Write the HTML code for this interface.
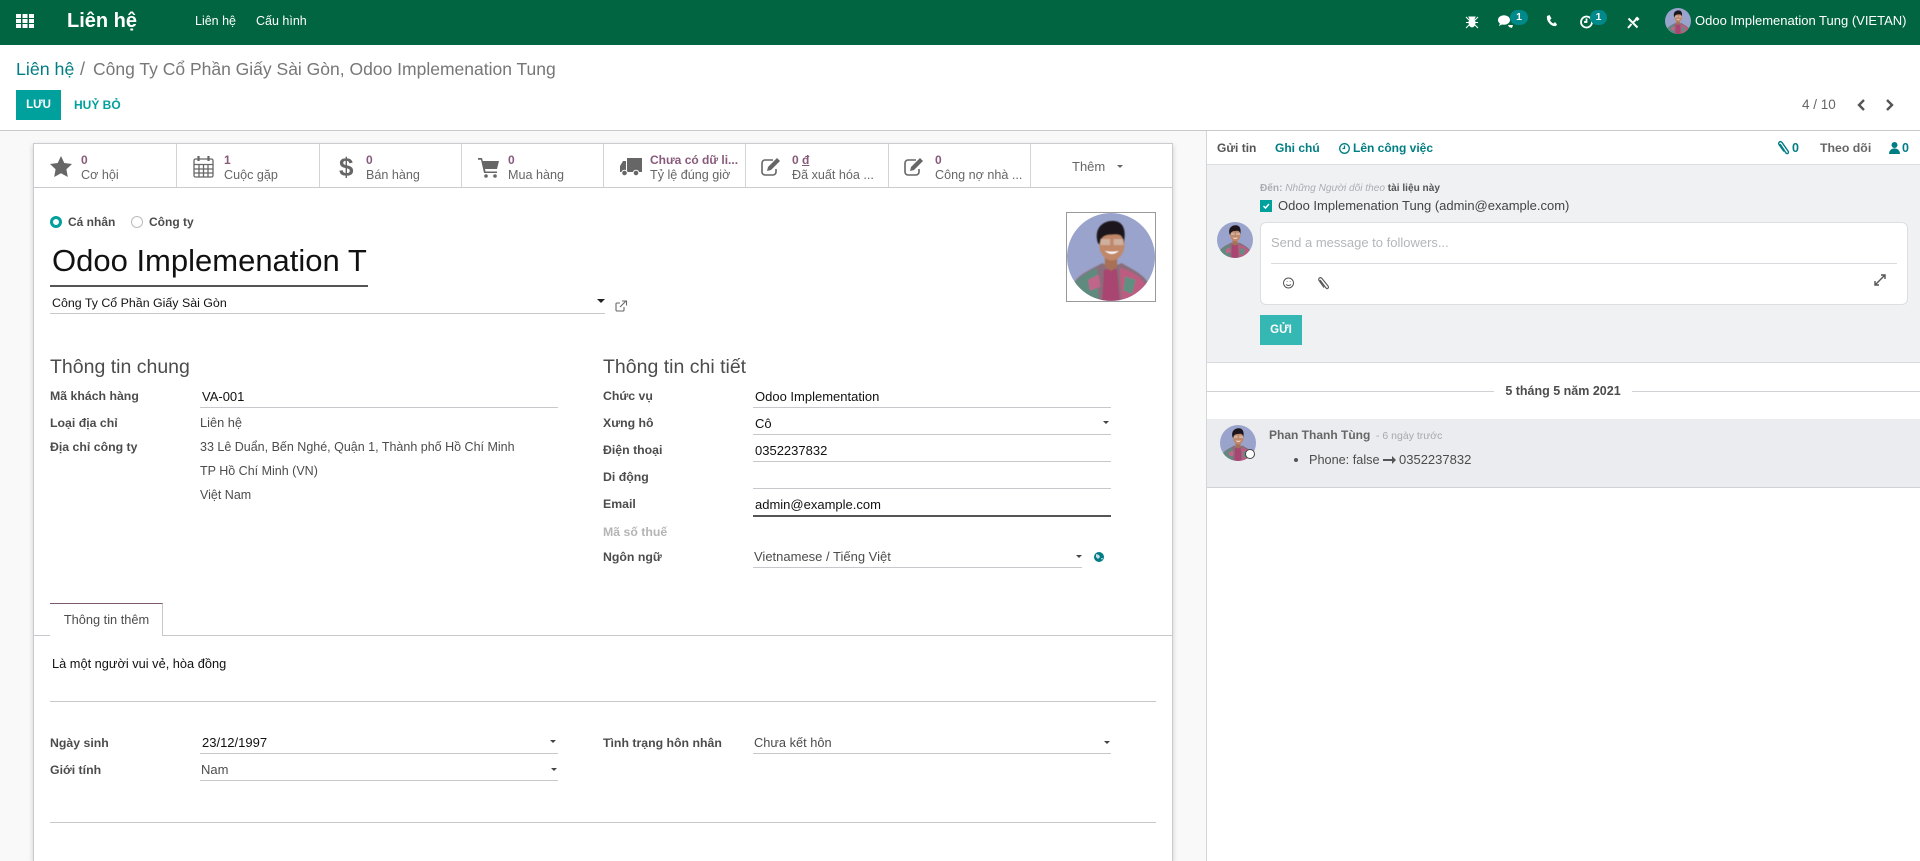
<!DOCTYPE html>
<html lang="vi"><head><meta charset="utf-8"><title>Liên hệ</title>
<style>
*{box-sizing:border-box}
html,body{margin:0;padding:0;width:1920px;height:861px;overflow:hidden;background:#fff;font-family:"Liberation Sans","Noto Sans CJK SC",sans-serif;font-size:13px;color:#4c4c4c}
.a{position:absolute}
.t{position:absolute;white-space:nowrap;line-height:16px;height:16px}
.b{font-weight:700;font-size:12.300px}
.w{color:#fff}
.k{color:#111}
.l{position:absolute;height:1px;background:#c6c8cb}
.p{color:#875a7b;font-weight:700}
.s{color:#666}
.tl{color:#017e84}
svg{position:absolute;overflow:visible}
.car{position:absolute;width:0;height:0;border-left:4px solid transparent;border-right:4px solid transparent;border-top:4px solid #444}
</style></head><body>
<svg width="0" height="0" style="position:absolute"><defs>
<filter id="bl"><feGaussianBlur stdDeviation=".5"/></filter>
<symbol id="ph" viewBox="0 0 100 100">
<clipPath id="cc"><ellipse cx="50" cy="50" rx="50" ry="50"/></clipPath>
<g clip-path="url(#cc)">
<rect width="100" height="100" fill="#99a3cc"/>
<g filter="url(#bl)">
<path d="M8 80C12 70 28 64 40 57L50 62L62 57C74 64 88 70 92 80L100 100H0Z" fill="#8a6d7c"/>
<path d="M8 80C14 72 26 66 34 62L36 100H14Z" fill="#5f8a7e"/>
<path d="M24 76L36 70L38 84L26 88Z" fill="#c0668a"/>
<path d="M42 64L57 64L60 100L40 100Z" fill="#a8446f"/>
<path d="M60 62C72 66 84 72 90 82L72 100L62 100Z" fill="#bd5c80"/>
<path d="M66 72L78 76L74 92L64 88Z" fill="#5e8f80"/>
<path d="M43 50H57V61L50 66L43 61Z" fill="#a86f54"/>
<ellipse cx="51" cy="35" rx="14.500" ry="19" fill="#c08768"/>
<path d="M35 34C30 16 42 9 52 9C63 9 68 18 64.500 34C63 27 62 24 54 24.500C46 25 39 24 37 36Z" fill="#1b191c"/>
<path d="M38 29.500h11v7h-11zM53 29.500h11v7h-11z" fill="#d7c5bb" opacity=".65"/>
<path d="M43 43q8 7 16 0q-8 2-16 0z" fill="#fff"/>
</g></g></symbol>
<symbol id="ed" viewBox="0 0 22 20"><path d="M15 12v3a3 3 0 0 1-3 3H4a3 3 0 0 1-3-3V6a3 3 0 0 1 3-3h8" fill="none" stroke="currentColor" stroke-width="1.600"/><path d="M6 14l1-4L16 1l3 3-9 9z" fill="currentColor"/></symbol>
</defs></svg>

<!-- topbar -->
<div class="a" style="left:0;top:0;width:1920px;height:45px;background:#016541"></div>
<svg style="left:16px;top:14px" width="18" height="14" fill="#fff"><path d="M0 0h5v4H0zM6.500 0h5v4h-5zM13 0h5v4h-5zM0 5h5v4H0zM6.500 5h5v4h-5zM13 5h5v4h-5zM0 10h5v4H0zM6.500 10h5v4h-5zM13 10h5v4h-5z"/></svg>
<div class="t w" style="left:67px;top:9px;font-size:20px;font-weight:700;line-height:24px;height:24px">Liên hệ</div>
<div class="t w" style="left:195px;top:13px;font-size:12.500px">Liên hệ</div>
<div class="t w" style="left:256px;top:13px;font-size:12.500px">Cấu hình</div>
<svg style="left:1466px;top:15px" width="12" height="13" fill="#fff"><ellipse cx="6" cy="7.500" rx="3.500" ry="5"/><path d="M3 2h6L8 4H4zM0 2l3 3M12 2L9 5M0 7.500h3M9 7.500h3M0 13l3-3M12 13L9 10" stroke="#fff"/></svg>
<svg style="left:1498px;top:15px" width="16" height="14" fill="#fff"><ellipse cx="6" cy="5" rx="6" ry="4.800"/><path d="M2 8L1 11l4-2zM10 10h5l-1 3-3-1z"/></svg>
<div class="a" style="left:1510px;top:10px;width:18px;height:15px;border-radius:8px;background:#00898a"></div><div class="t w" style="font-weight:700;left:1510px;width:18px;text-align:center;top:9px;font-size:10.500px">1</div>
<svg style="left:1546px;top:15px" width="11" height="12" fill="#fff"><path d="M1 1l2.500-1 2 3.500-1.500 1.500c.5 1.500 2 3 3.500 3.500L9 7l2 2.500L10 11c-5 1-10-5-9-10z"/></svg>
<svg style="left:1580px;top:15px" width="13" height="14" fill="none" stroke="#fff" stroke-width="1.800"><circle cx="6.500" cy="7" r="5.500"/><path d="M6.500 3.500V7H4"/></svg>
<div class="a" style="left:1590px;top:10px;width:17px;height:15px;border-radius:8px;background:#00898a"></div><div class="t w" style="font-weight:700;left:1590px;width:17px;text-align:center;top:9px;font-size:10.500px">1</div>
<svg style="left:1627px;top:17px" width="12" height="12" fill="none" stroke="#fff" stroke-width="2"><path d="M1.500 1.500l9 9M10.500 1L6 5.500M4.500 7L1 11"/><path d="M9 .5l2.500 2.500" stroke-width="3"/></svg>
<svg style="left:1665px;top:8px" width="26" height="26"><use href="#ph"/></svg>
<div class="t w" style="left:1695px;top:13px;font-size:13px">Odoo Implemenation Tung (VIETAN)</div>

<!-- control panel -->
<div class="t" style="left:16px;top:58px;height:22px;line-height:22px;font-size:17.800px;color:#017e84">Liên hệ</div>
<div class="t" style="left:80px;top:58px;height:22px;line-height:22px;font-size:18px;color:#777">/</div>
<div class="t" style="left:93px;top:58px;height:22px;line-height:22px;font-size:17.500px;color:#777">Công Ty Cổ Phần Giấy Sài Gòn, Odoo Implemenation Tung</div>
<div class="a w" style="font-weight:700;left:16px;top:90px;width:45px;height:30px;background:#00a09d;text-align:center;line-height:30px;font-size:11.500px">LƯU</div>
<div class="t" style="font-weight:700;left:74px;top:97px;font-size:12px;color:#00a09d">HUỶ BỎ</div>
<div class="t" style="left:1802px;top:97px;color:#666;font-size:13.500px">4 / 10</div>
<svg style="left:1857px;top:99px" width="8" height="12" fill="none" stroke="#555" stroke-width="2.400"><path d="M7 1L2 6l5 5"/></svg>
<svg style="left:1886px;top:99px" width="8" height="12" fill="none" stroke="#555" stroke-width="2.400"><path d="M1 1l5 5-5 5"/></svg>
<div class="a" style="left:0;top:130px;width:1920px;height:1px;background:#c9c9c9"></div>

<!-- sheet bg -->
<div class="a" style="left:0;top:131px;width:1206px;height:730px;background:#f9f9f9"></div>
<div class="a" style="left:33px;top:143px;width:1140px;height:718px;background:#fff;border:1px solid #c9cbce;border-bottom:0;box-shadow:0 2px 5px rgba(0,0,0,.18)"></div>

<!-- stat buttons -->
<div class="l" style="left:34px;top:187px;width:1138px;background:#c9cbce"></div>
<div class="a" style="left:176px;top:144px;width:1px;height:43px;background:#d2d4d6"></div>
<div class="a" style="left:319px;top:144px;width:1px;height:43px;background:#d2d4d6"></div>
<div class="a" style="left:461px;top:144px;width:1px;height:43px;background:#d2d4d6"></div>
<div class="a" style="left:603px;top:144px;width:1px;height:43px;background:#d2d4d6"></div>
<div class="a" style="left:745px;top:144px;width:1px;height:43px;background:#d2d4d6"></div>
<div class="a" style="left:888px;top:144px;width:1px;height:43px;background:#d2d4d6"></div>
<div class="a" style="left:1030px;top:144px;width:1px;height:43px;background:#d2d4d6"></div>

<svg style="left:50px;top:156px" width="22" height="21" fill="#666"><path d="M11 0l3.300 7 7.700 1-5.600 5.300L17.800 21 11 17.200 4.200 21l1.400-7.700L0 8l7.700-1z"/></svg>
<div class="t p" style="left:81px;top:152px;font-size:12px">0</div><div class="t s" style="left:81px;top:167px;font-size:12.600px">Cơ hội</div>

<svg style="left:193px;top:156px" width="21" height="22" fill="none" stroke="#666" stroke-width="1.300"><rect x="1" y="3" width="19" height="18" rx="1.500"/><path d="M1 8.500h19M1 13h19M1 17h19M6 8v13M10.500 8v13M15 8v13"/><path d="M5.500 0v5M15.500 0v5" stroke-width="2.200"/></svg>
<div class="t p" style="left:224px;top:152px;font-size:12px">1</div><div class="t s" style="left:224px;top:167px;font-size:12.600px">Cuộc gặp</div>

<div class="t" style="font-weight:700;left:339px;top:153px;height:28px;line-height:28px;font-size:26px;color:#666">$</div>
<div class="t p" style="left:366px;top:152px;font-size:12px">0</div><div class="t s" style="left:366px;top:167px;font-size:12.600px">Bán hàng</div>

<svg style="left:478px;top:158px" width="21" height="20" fill="#666"><path d="M0 0h4l.8 3H21l-2 8H7l.5 2.500H19V15H6L3 1.800H0z"/><circle cx="8" cy="18" r="1.800"/><circle cx="17" cy="18" r="1.800"/></svg>
<div class="t p" style="left:508px;top:152px;font-size:12px">0</div><div class="t s" style="left:508px;top:167px;font-size:12.600px">Mua hàng</div>

<svg style="left:620px;top:158px" width="22" height="18" fill="#666"><path d="M7 0h15v14H7zM0 8l3-5h3v11H0z"/><circle cx="4.500" cy="15" r="2.800" stroke="#fff"/><circle cx="16" cy="15" r="2.800" stroke="#fff"/></svg>
<div class="t p" style="left:650px;top:152px;font-size:12px">Chưa có dữ li...</div><div class="t s" style="left:650px;top:167px;font-size:12.600px">Tỷ lệ đúng giờ</div>

<svg style="left:761px;top:157px;color:#666" width="22" height="20"><use href="#ed"/></svg>
<div class="t p" style="left:792px;top:152px;font-size:12px">0 <u>đ</u></div><div class="t s" style="left:792px;top:167px;font-size:12.600px">Đã xuất hóa ...</div>

<svg style="left:904px;top:157px;color:#666" width="22" height="20"><use href="#ed"/></svg>
<div class="t p" style="left:935px;top:152px;font-size:12px">0</div><div class="t s" style="left:935px;top:167px;font-size:12.600px">Công nợ nhà ...</div>

<div class="t s" style="left:1072px;top:159px;font-size:13px">Thêm</div>
<div class="car" style="left:1117px;top:165px;border-top-color:#666;border-left-width:3.500px;border-right-width:3.500px;border-top-width:3.500px"></div>

<!-- title area -->
<div class="a" style="left:50px;top:216px;width:12px;height:12px;border-radius:50%;background:#fff;border:3.500px solid #00a09d"></div>
<div class="t b" style="left:68px;top:214px;font-size:12px">Cá nhân</div>
<div class="a" style="left:131px;top:216px;width:12px;height:12px;border-radius:50%;background:#fff;border:1px solid #bbb"></div>
<div class="t b" style="left:149px;top:214px;font-size:12px">Công ty</div>
<div class="t" style="left:52px;top:241px;height:40px;line-height:40px;font-size:31px;color:#111">Odoo Implemenation T</div>
<div class="a" style="left:50px;top:285px;width:318px;height:2px;background:#555"></div>
<div class="t k" style="left:52px;top:295px;font-size:12.400px">Công Ty Cổ Phần Giấy Sài Gòn</div>
<div class="l" style="left:50px;top:313px;width:555px"></div>
<div class="car" style="left:597px;top:299px;border-top-color:#222"></div>
<svg style="left:615px;top:300px" width="12" height="12" fill="none" stroke="#666" stroke-width="1.100"><path d="M9 7v3a1 1 0 0 1-1 1H2a1 1 0 0 1-1-1V4a1 1 0 0 1 1-1h3M5 7l5.500-5.500M7 1h4.500v4.500"/></svg>
<div class="a" style="left:1066px;top:212px;width:90px;height:90px;border:1px solid #999"></div>
<svg style="left:1067px;top:213px" width="88" height="88"><use href="#ph"/></svg>

<!-- left group -->
<div class="t" style="left:50px;top:355px;height:24px;line-height:24px;font-size:19.500px">Thông tin chung</div>
<div class="t b" style="left:50px;top:388px">Mã khách hàng</div>
<div class="t k" style="left:202px;top:389px">VA-001</div>
<div class="l" style="left:200px;top:407px;width:358px"></div>
<div class="t b" style="left:50px;top:415px">Loại địa chỉ</div>
<div class="t" style="left:200px;top:415px;font-size:12.800px">Liên hệ</div>
<div class="t b" style="left:50px;top:439px">Địa chỉ công ty</div>
<div class="t" style="left:200px;top:439px;font-size:12.500px">33 Lê Duẩn, Bến Nghé, Quận 1, Thành phố Hồ Chí Minh</div>
<div class="t" style="left:200px;top:463px;font-size:12.500px">TP Hồ Chí Minh (VN)</div>
<div class="t" style="left:200px;top:487px;font-size:12.500px">Việt Nam</div>

<!-- right group -->
<div class="t" style="left:603px;top:355px;height:24px;line-height:24px;font-size:19.500px">Thông tin chi tiết</div>
<div class="t b" style="left:603px;top:388px">Chức vụ</div>
<div class="t k" style="left:755px;top:389px">Odoo Implementation</div>
<div class="l" style="left:753px;top:407px;width:358px"></div>
<div class="t b" style="left:603px;top:415px">Xưng hô</div>
<div class="t k" style="left:755px;top:416px">Cô</div>
<div class="car" style="left:1103px;top:421px;border-left-width:3.500px;border-right-width:3.500px;border-top-width:3.500px"></div>
<div class="l" style="left:753px;top:434px;width:358px"></div>
<div class="t b" style="left:603px;top:442px">Điện thoại</div>
<div class="t k" style="left:755px;top:443px">0352237832</div>
<div class="l" style="left:753px;top:461px;width:358px"></div>
<div class="t b" style="left:603px;top:469px">Di động</div>
<div class="l" style="left:753px;top:488px;width:358px"></div>
<div class="t b" style="left:603px;top:496px">Email</div>
<div class="t k" style="left:755px;top:497px">admin@example.com</div>
<div class="a" style="left:753px;top:515px;width:358px;height:2px;background:#555"></div>
<div class="t b" style="left:603px;top:524px;color:#b5b5b5">Mã số thuế</div>
<div class="t b" style="left:603px;top:549px">Ngôn ngữ</div>
<div class="t" style="left:754px;top:549px">Vietnamese / Tiếng Việt</div>
<div class="car" style="left:1076px;top:555px;border-left-width:3px;border-right-width:3px;border-top-width:3px"></div>
<div class="l" style="left:753px;top:567px;width:329px"></div>
<svg style="left:1094px;top:552px" width="10" height="10"><circle cx="5" cy="5" r="5" fill="#017e84"/><path d="M2 2l3 1 1 2-2 2-2-2zM7 6l2 0-1 2z" fill="#cde"/></svg>

<!-- notebook -->
<div class="l" style="left:34px;top:635px;width:1138px"></div>
<div class="a" style="left:50px;top:603px;width:113px;height:33px;background:#fff;border-right:1px solid #c6c8cb;border-top:1px solid #7c5a73"></div>
<div class="t" style="left:50px;top:612px;width:113px;text-align:center;font-size:12.800px">Thông tin thêm</div>
<div class="t k" style="left:52px;top:656px;font-size:12.800px">Là một người vui vẻ, hòa đồng</div>
<div class="l" style="left:50px;top:701px;width:1106px"></div>
<div class="t b" style="left:50px;top:735px">Ngày sinh</div>
<div class="t k" style="left:202px;top:735px">23/12/1997</div>
<div class="car" style="left:550px;top:740px;border-left-width:3.500px;border-right-width:3.500px;border-top-width:3.500px"></div>
<div class="l" style="left:200px;top:753px;width:358px"></div>
<div class="t b" style="left:50px;top:762px">Giới tính</div>
<div class="t" style="left:201px;top:762px">Nam</div>
<div class="car" style="left:551px;top:768px;border-left-width:3px;border-right-width:3px;border-top-width:3px"></div>
<div class="l" style="left:200px;top:780px;width:358px"></div>
<div class="t b" style="left:603px;top:735px">Tình trạng hôn nhân</div>
<div class="t" style="left:754px;top:735px;font-size:12.800px">Chưa kết hôn</div>
<div class="car" style="left:1104px;top:741px;border-left-width:3px;border-right-width:3px;border-top-width:3px"></div>
<div class="l" style="left:753px;top:753px;width:358px"></div>
<div class="l" style="left:50px;top:822px;width:1106px"></div>

<!-- chatter -->
<div class="a" style="left:1206px;top:131px;width:1px;height:730px;background:#d3d5d8"></div>
<div class="a" style="left:1207px;top:164px;width:713px;height:199px;background:#f0f1f3;border-bottom:1px solid #d8dadd"></div>
<div class="l" style="left:1207px;top:164px;width:713px;background:#dcdee0"></div>
<div class="t" style="font-weight:700;left:1217px;top:140px;font-size:12px;color:#555">Gửi tin</div>
<div class="t tl" style="font-weight:700;left:1275px;top:140px;font-size:12px">Ghi chú</div>
<svg style="left:1339px;top:143px" width="11" height="11" fill="none" stroke="#017e84" stroke-width="1.300"><circle cx="5.500" cy="5.500" r="4.800"/><path d="M5.500 2.500v3H3.500"/></svg>
<div class="t tl" style="font-weight:700;left:1353px;top:140px;font-size:12px">Lên công việc</div>
<svg style="left:1778px;top:141px" width="11" height="14" fill="none" stroke="#017e84" stroke-width="1.400"><path d="M2 3l6 9c2 2 3-1 2-2L4 1.500c-2-2-4 0-3 2l5 7"/></svg>
<div class="t tl" style="font-weight:700;left:1792px;top:140px;font-size:12.500px">0</div>
<div class="t" style="font-weight:700;left:1820px;top:140px;font-size:12.300px;color:#666">Theo dõi</div>
<svg style="left:1889px;top:142px" width="11" height="12" fill="#017e84"><circle cx="5.500" cy="3" r="3"/><path d="M0 12c0-7.500 11-7.500 11 0z"/></svg>
<div class="t tl" style="font-weight:700;left:1902px;top:140px;font-size:12.500px">0</div>

<div class="t" style="left:1260px;top:181px;font-size:10.100px;color:#a9adb2"><b>Đến:</b> <i>Những Người dõi theo</i> <b style="color:#555">tài liệu này</b></div>
<div class="a" style="left:1260px;top:200px;width:12px;height:12px;background:#00a09d"></div>
<svg style="left:1263px;top:203px" width="7" height="6" fill="none" stroke="#fff" stroke-width="1.500"><path d="M.5 3l2 2L6 1"/></svg>
<div class="t" style="left:1278px;top:198px;font-size:13px;color:#444">Odoo Implemenation Tung (admin@example.com)</div>
<svg style="left:1217px;top:222px" width="36" height="36"><use href="#ph"/></svg>
<div class="a" style="left:1260px;top:222px;width:648px;height:83px;background:#fff;border:1px solid #dcdee1;border-radius:6px"></div>
<div class="t" style="left:1271px;top:235px;font-size:13px;color:#b4b6b9">Send a message to followers...</div>
<div class="l" style="left:1271px;top:263px;width:626px;background:#d9dbde"></div>
<svg style="left:1283px;top:277px" width="11" height="12" fill="none" stroke="#555" stroke-width="1"><circle cx="5.500" cy="6" r="5"/><path d="M3 7.500q2.500 2 5 0M3.800 4.500h.6M6.800 4.500h.6"/></svg>
<svg style="left:1318px;top:277px" width="11" height="13" fill="none" stroke="#555" stroke-width="1.100"><path d="M2 3l6 8c2 2 3-1 2-2L4 1.500c-2-2-4 0-3 2l5 7"/></svg>
<svg style="left:1874px;top:274px" width="12" height="12" fill="none" stroke="#555" stroke-width="1.400"><path d="M1 11l10-10M7 1h4v4M1 7v4h4"/></svg>
<div class="a w" style="font-weight:700;left:1260px;top:315px;width:42px;height:30px;background:#35b7b4;text-align:center;line-height:30px;font-size:11.500px">GỬI</div>

<div class="l" style="left:1207px;top:391px;width:287px;background:#cfd1d4"></div>
<div class="l" style="left:1632px;top:391px;width:288px;background:#cfd1d4"></div>
<div class="t" style="font-weight:700;left:1494px;top:383px;width:138px;text-align:center;font-size:12.500px">5 tháng 5 năm 2021</div>

<div class="a" style="left:1207px;top:419px;width:713px;height:69px;background:#ebecef;border-bottom:1px solid #d0d2d5"></div>
<svg style="left:1220px;top:425px" width="36" height="36"><use href="#ph"/></svg>
<div class="a" style="left:1245px;top:449px;width:10px;height:10px;border-radius:50%;background:#fff;border:1.500px solid #444"></div>
<div class="t" style="font-weight:700;left:1269px;top:427px;font-size:12px;color:#666">Phan Thanh Tùng</div>
<div class="t" style="left:1376px;top:428px;font-size:10.500px;color:#a5a8ac">- 6 ngày trước</div>
<div class="a" style="left:1294px;top:458px;width:4px;height:4px;border-radius:50%;background:#555"></div>
<div class="t" style="left:1309px;top:452px;font-size:12.700px">Phone: false</div>
<svg style="left:1383px;top:456px" width="13" height="8" fill="#555"><path d="M0 3h9V0l4 4-4 4V5H0z"/></svg>
<div class="t" style="left:1399px;top:452px;font-size:13px">0352237832</div>
</body></html>
